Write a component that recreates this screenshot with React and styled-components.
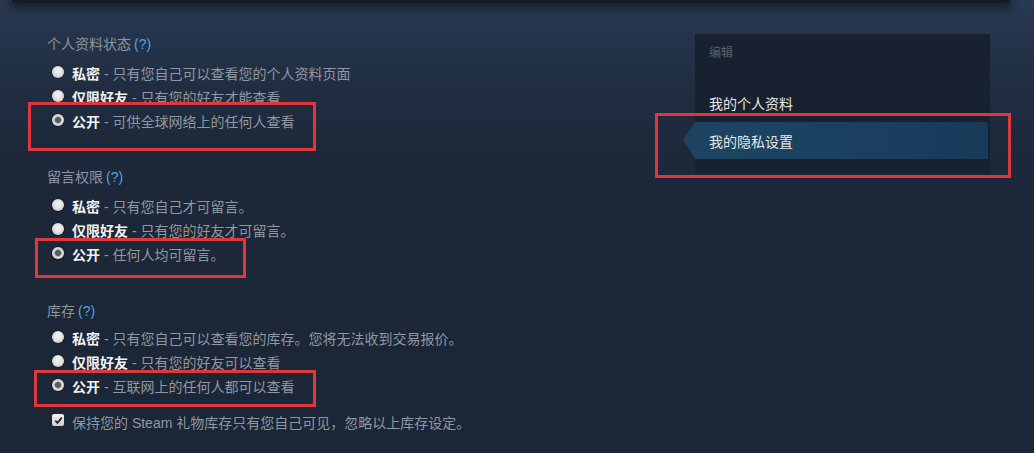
import React from "react";
import styled, { createGlobalStyle } from "styled-components";

const GlobalStyle = createGlobalStyle`
  html, body {
    margin: 0;
    padding: 0;
    background: #1b2637;
  }
  body {
    font-family: "Liberation Sans", "Noto Sans CJK SC", sans-serif;
  }
`;

const Page = styled.div`
  position: relative;
  width: 1034px;
  height: 453px;
  overflow: hidden;
  background: linear-gradient(
    180deg,
    #2a3a52 0px,
    #243349 40px,
    #1f2b3e 110px,
    #1c2738 200px,
    #1b2637 100%
  );
`;

const TopBar = styled.div`
  height: 3px;
  margin: 0 24px 0 12px;
  background: #141c27;
  box-shadow: 0 2px 8px 2px rgba(8, 12, 18, 0.75);
`;

const Body = styled.div`
  display: flex;
  align-items: flex-start;
`;

const Settings = styled.div`
  flex: 1;
  padding: 32px 0 0 47px;
`;

const Section = styled.div`
  margin-bottom: ${(p) => p.$gap ?? 36}px;
`;

const Heading = styled.div`
  font-size: 14px;
  line-height: 18px;
  color: #8c96a1;
  margin-bottom: ${(p) => (p.$tight ? 6 : 8)}px;
`;

const Help = styled.span`
  color: #4fa6e0;
  margin-left: 3px;
`;

const Row = styled.label`
  display: flex;
  align-items: center;
  height: 24px;
  padding-left: 5px;
  font-size: 14px;
  color: #8f98a0;
  white-space: nowrap;
`;

const Radio = styled.span`
  box-sizing: border-box;
  width: 12px;
  height: 12px;
  border-radius: 50%;
  margin-right: 8px;
  margin-top: -3px;
  flex: none;
  background: ${(p) =>
    p.$checked
      ? "radial-gradient(circle, #5b5b5b 0 2.6px, #9a9a9a 3.2px, #dcdcdc 4px, #cfcfcf 100%)"
      : "radial-gradient(circle at 50% 40%, #f4f4f4 0, #dadada 60%, #b9b9b9 100%)"};
  box-shadow: 0 0 0 1px rgba(0, 0, 0, 0.25);
`;

const Box = styled.span`
  box-sizing: border-box;
  width: 12px;
  height: 12px;
  margin-right: 8px;
  margin-top: -4px;
  flex: none;
  border-radius: 2px;
  background: linear-gradient(180deg, #f2f2f2, #cfcfcf);
  display: flex;
  align-items: center;
  justify-content: center;
`;

const Strong = styled.b`
  color: #f2f2f2;
  font-weight: 700;
`;

const CheckRow = styled(Row)`
  margin-top: 12px;
`;

const Sidebar = styled.div`
  width: 295px;
  height: 140px;
  margin: 31px 44px 0 0;
  background: #172130;
  box-sizing: border-box;
  padding-top: 10px;
`;

const SideLabel = styled.div`
  font-size: 12px;
  line-height: 18px;
  color: #56616d;
  padding-left: 14px;
  margin-bottom: 29px;
`;

const SideLink = styled.div`
  position: relative;
  height: ${(p) => (p.$active ? 37 : 24)}px;
  display: flex;
  align-items: center;
  padding-left: 14px;
  margin-right: 2px;
  font-size: 14px;
  color: #e6e6e6;
  margin-bottom: 7px;
  background: ${(p) =>
    p.$active ? "linear-gradient(90deg, #1d4563 0%, #1a3f5f 60%, #183a59 100%)" : "transparent"};

  &::before {
    content: "";
    display: ${(p) => (p.$active ? "block" : "none")};
    position: absolute;
    left: -12px;
    top: 0;
    border-style: solid;
    border-width: 18.5px 12px 18.5px 0;
    border-color: transparent #1d4563 transparent transparent;
  }
`;

const Mark = styled.div`
  position: absolute;
  box-sizing: border-box;
  border: 3px solid #e0373d;
  pointer-events: none;
`;

const options = [
  {
    title: "个人资料状态",
    gap: 35,
    rows: [
      ["私密", "只有您自己可以查看您的个人资料页面"],
      ["仅限好友", "只有您的好友才能查看"],
      ["公开", "可供全球网络上的任何人查看"],
    ],
  },
  {
    title: "留言权限",
    gap: 36,
    rows: [
      ["私密", "只有您自己才可留言。"],
      ["仅限好友", "只有您的好友才可留言。"],
      ["公开", "任何人均可留言。"],
    ],
  },
  {
    title: "库存",
    gap: 0,
    tight: true,
    rows: [
      ["私密", "只有您自己可以查看您的库存。您将无法收到交易报价。"],
      ["仅限好友", "只有您的好友可以查看"],
      ["公开", "互联网上的任何人都可以查看"],
    ],
  },
];

const marks = [
  { left: 28, top: 102, width: 288, height: 49 },
  { left: 35, top: 238, width: 211, height: 40 },
  { left: 34, top: 370, width: 282, height: 37 },
  { left: 655, top: 113, width: 356, height: 65 },
];

export default function App() {
  return (
    <>
      <GlobalStyle />
      <Page>
        <TopBar />
        <Body>
          <Settings>
            {options.map((s) => (
              <Section key={s.title} $gap={s.gap}>
                <Heading $tight={s.tight}>
                  {s.title}
                  <Help>(?)</Help>
                </Heading>
                {s.rows.map(([label, desc], i) => (
                  <Row key={label}>
                    <Radio $checked={i === 2} />
                    <Strong>{label}</Strong>&nbsp;- {desc}
                  </Row>
                ))}
              </Section>
            ))}
            <CheckRow>
              <Box>
                <svg width="9" height="9" viewBox="0 0 9 9">
                  <path d="M1.3 4.6 L3.5 6.9 L7.8 1.6" fill="none" stroke="#2b2b2b" strokeWidth="1.8" />
                </svg>
              </Box>
              保持您的 Steam 礼物库存只有您自己可见，忽略以上库存设定。
            </CheckRow>
          </Settings>
          <Sidebar>
            <SideLabel>编辑</SideLabel>
            <SideLink>我的个人资料</SideLink>
            <SideLink $active>我的隐私设置</SideLink>
          </Sidebar>
        </Body>
        {marks.map((m, i) => (
          <Mark key={i} style={m} />
        ))}
      </Page>
    </>
  );
}
